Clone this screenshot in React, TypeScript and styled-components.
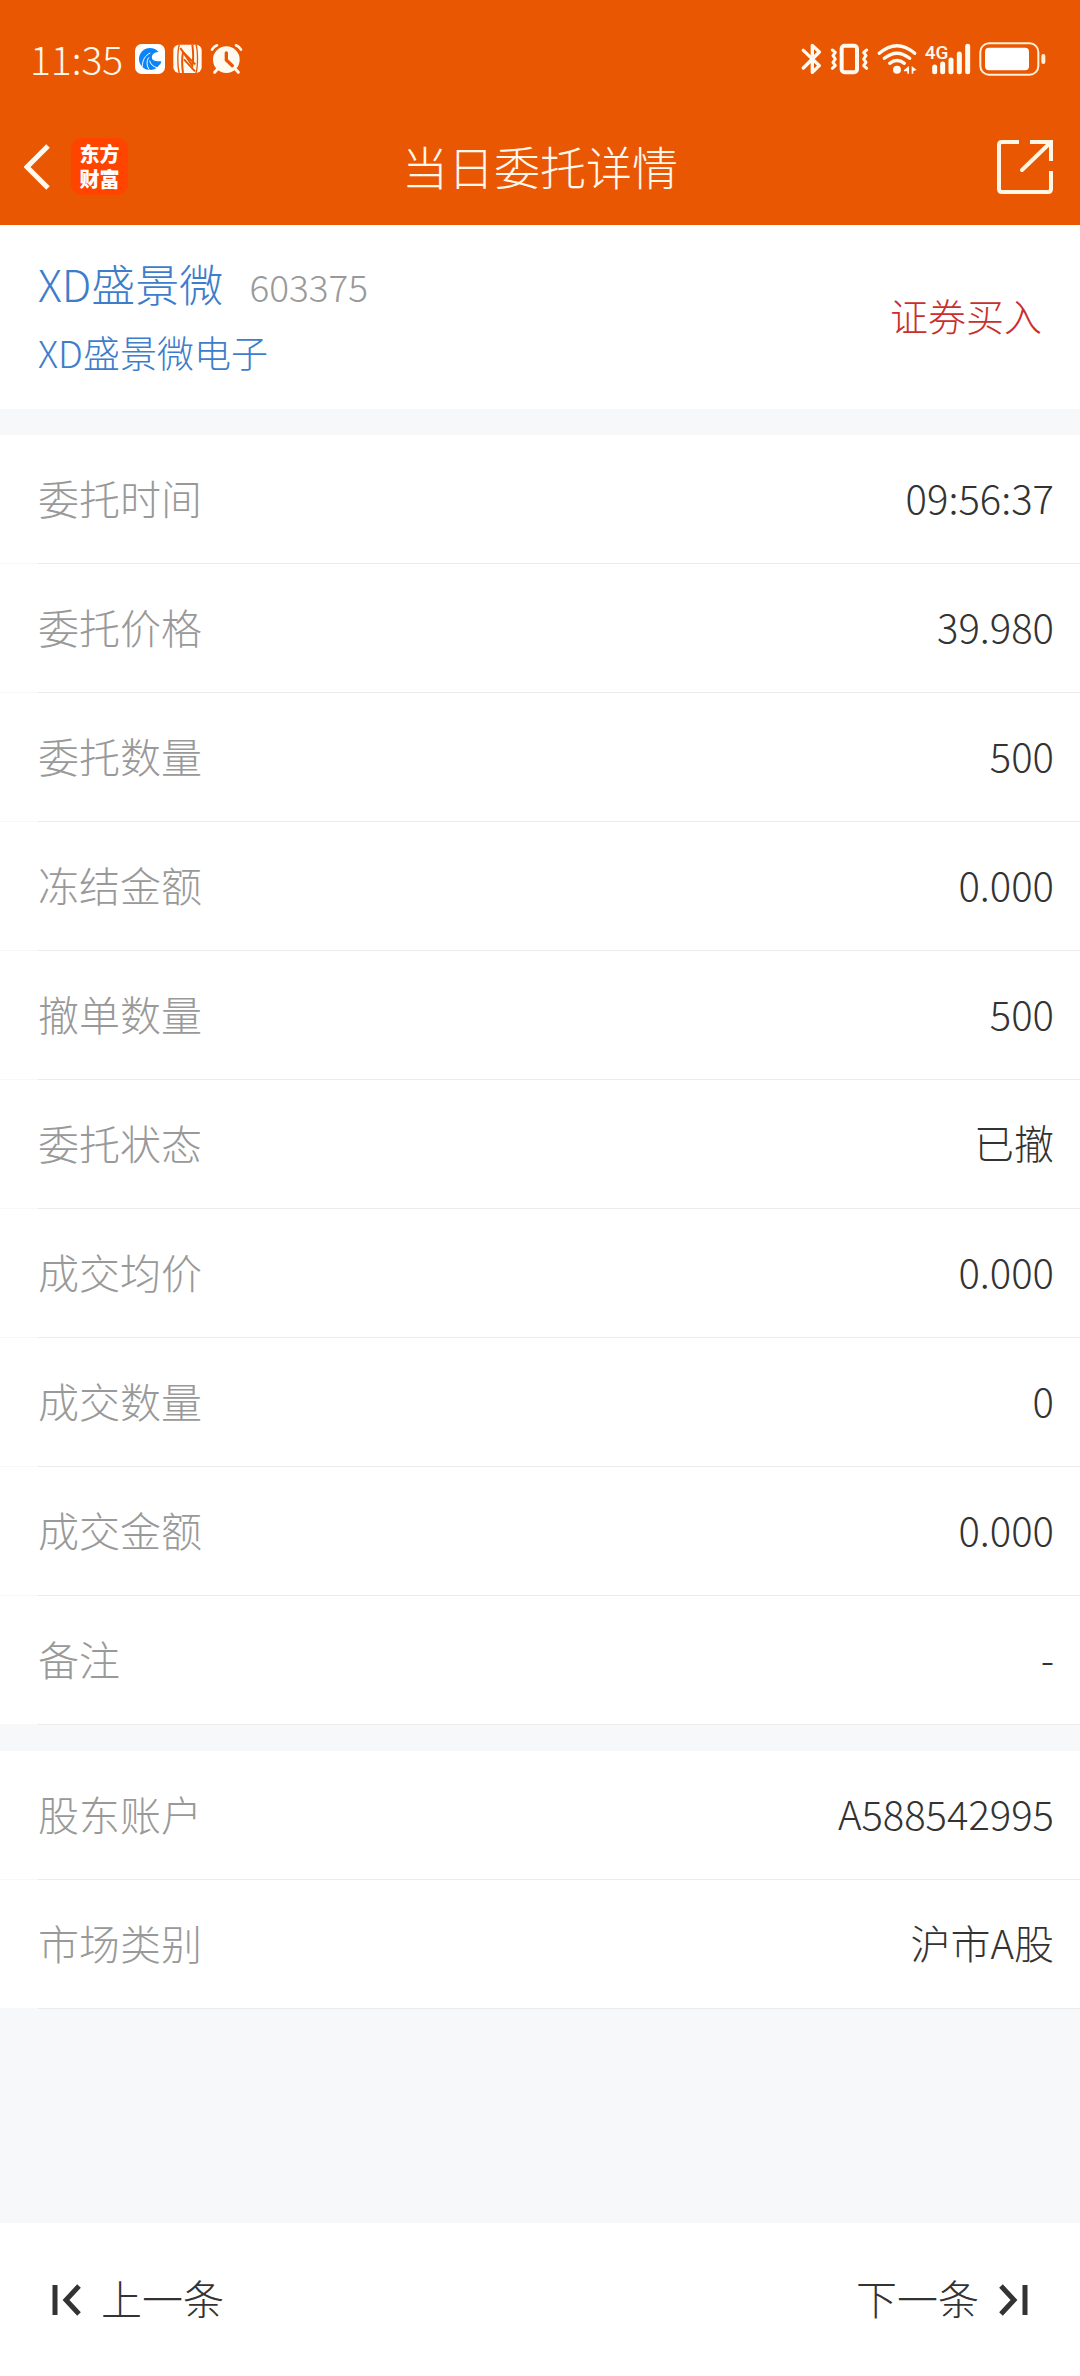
import React from "react";
import styled, { createGlobalStyle } from "styled-components";

const GlobalStyle = createGlobalStyle`
  * { box-sizing: border-box; }
  body {
    margin: 0;
    background: #f7f8fa;
    color: #333;
    font-family: "Noto Sans CJK SC", sans-serif;
    font-weight: 300;
  }
`;

const Page = styled.div`
  display: flex;
  flex-direction: column;
  min-height: 100vh;
`;

const Header = styled.header`
  background: #ea5703;
  color: #fff8ec;
`;

const StatusBar = styled.div`
  display: flex;
  align-items: center;
  justify-content: space-between;
  height: 118px;
  padding: 0 34px 0 30px;
`;

const StatusGroup = styled.div`
  display: flex;
  align-items: center;
  gap: 8px;
`;

const Clock = styled.time`
  margin-right: 4px;
  padding-bottom: 2px;
  font-size: 39px;
  line-height: 40px;
`;

const Glyph = styled.svg`
  display: block;
  flex: none;
`;

const NavBar = styled.nav`
  display: grid;
  grid-template-columns: 1fr auto 1fr;
  align-items: center;
  height: 107px;
  padding: 0 24px 10px;
`;

const NavStart = styled.div`
  display: flex;
  align-items: center;
  gap: 20px;
`;

const IconButton = styled.button`
  display: block;
  padding: 0;
  border: 0;
  background: none;
  color: inherit;
  cursor: pointer;
`;

const ShareButton = styled(IconButton)`
  justify-self: end;
`;

const Brand = styled.a`
  display: grid;
  place-content: center;
  width: 57px;
  height: 57px;
  padding-bottom: 2px;
  border-radius: 11px;
  background: #ff4400;
  color: #fff;
  font-size: 20px;
  font-weight: 900;
  line-height: 25px;
  text-align: center;
  text-decoration: none;
`;

const Title = styled.h1`
  margin: 0;
  padding-bottom: 4px;
  font-size: 46px;
  font-weight: 300;
  line-height: 60px;
`;

const Summary = styled.section`
  display: flex;
  align-items: center;
  justify-content: space-between;
  height: 184px;
  padding: 0 38px 4px;
  background: #fff;
`;

const StockNames = styled.div`
  display: flex;
  flex-direction: column;
  gap: 10px;
`;

const NameLine = styled.div`
  display: flex;
  align-items: baseline;
  gap: 26px;
  line-height: 60px;
`;

const StockName = styled.span`
  color: #3d7dcb;
  font-size: 44px;
`;

const StockCode = styled.span`
  color: #999;
  font-size: 37px;
`;

const CompanyName = styled.span`
  color: #3d7dcb;
  font-size: 37px;
  line-height: 52px;
`;

const Side = styled.span`
  color: #c9302c;
  font-size: 38px;
  line-height: 52px;
`;

const Details = styled.dl`
  margin: 26px 0 0;
  background: #fff;
`;

const Row = styled.div`
  display: flex;
  align-items: center;
  justify-content: space-between;
  height: 129px;
  padding: 0 26px 6px 38px;
  background: linear-gradient(to right, #f8f8f8 38px, #ebebec 38px) bottom / 100% 1px no-repeat;
`;

const Label = styled.dt`
  color: #999;
  font-size: 41px;
  line-height: 60px;
`;

const Value = styled.dd`
  margin: 0;
  font-size: 40px;
  line-height: 60px;
`;

const Pager = styled.footer`
  display: flex;
  align-items: center;
  justify-content: space-between;
  height: 153px;
  margin-top: auto;
  padding: 0 52px;
  background: #fff;
`;

const PagerButton = styled.button`
  display: flex;
  align-items: center;
  gap: 19px;
  padding: 0;
  border: 0;
  background: none;
  color: #333;
  font: inherit;
  font-size: 41px;
  line-height: 60px;
  cursor: pointer;
`;

const PagerText = styled.span`
  padding-bottom: 6px;
`;

const orderRows = [
  ["委托时间", "09:56:37"],
  ["委托价格", "39.980"],
  ["委托数量", "500"],
  ["冻结金额", "0.000"],
  ["撤单数量", "500"],
  ["委托状态", "已撤"],
  ["成交均价", "0.000"],
  ["成交数量", "0"],
  ["成交金额", "0.000"],
  ["备注", "-"],
];

const accountRows = [
  ["股东账户", "A588542995"],
  ["市场类别", "沪市A股"],
];

const DetailList = ({ rows }: { rows: string[][] }) => (
  <Details>
    {rows.map(([label, value]) => (
      <Row key={label}>
        <Label>{label}</Label>
        <Value>{value}</Value>
      </Row>
    ))}
  </Details>
);

const BrowserIcon = () => (
  <Glyph width="30" height="34" viewBox="402 66 90 102" aria-hidden="true">
    <rect x="402" y="72" width="90" height="90" rx="20" fill="#fff" />
    <circle cx="447" cy="117" r="33" fill="#0d84f5" />
    <path d="M486 98C472 94 456 96 453 108C450 119 460 127 482 122L490 112Z" fill="#fff" />
    <path d="M424 140C424 121 432 106 448 99M446 151C436 138 436 122 444 112M468 143C456 140 448 132 446 122" fill="none" stroke="#fff" strokeWidth="3" />
    <path d="M455 124C460 133 470 134 481 124L478 133C469 137 458 135 452 127Z" fill="#0d84f5" />
  </Glyph>
);

const NfcIcon = () => (
  <Glyph width="29" height="34" viewBox="519 66 87 102" aria-hidden="true">
    <rect x="520" y="74" width="85" height="85" rx="17" fill="#fffaf0" />
    <g fill="none" stroke="#ea5703">
      <path d="M538 74C532 92 532 141 538 159M588 74C594 92 594 141 588 159" strokeWidth="4" />
      <path d="M549 159C546 138 546 112 549 96L586 133" strokeWidth="6" />
      <path d="M577 74C580 95 580 121 577 137L541 84" strokeWidth="6" />
      <path d="M552 118L585 154" strokeWidth="6" />
    </g>
  </Glyph>
);

const AlarmIcon = () => (
  <Glyph width="33" height="34" viewBox="630 66 99 102" aria-hidden="true">
    <g stroke="#fffaf0" strokeLinecap="round" fill="none">
      <path d="M636 89Q641 80 651 76M723 89Q718 80 708 76" strokeWidth="8" />
      <path d="M653 147L644 157M706 147L715 157" strokeWidth="9" />
    </g>
    <circle cx="679" cy="119" r="40" fill="#fffaf0" />
    <path d="M679 99V120L697 137" fill="none" stroke="#ea5703" strokeWidth="10" strokeLinecap="round" strokeLinejoin="round" />
  </Glyph>
);

const BluetoothIcon = () => (
  <Glyph width="21" height="34" viewBox="63 66 63 102" aria-hidden="true">
    <path d="M70 91L118 137L97 157V76L118 96L70 144" fill="none" stroke="#fffaf0" strokeWidth="10" strokeLinecap="round" strokeLinejoin="round" />
  </Glyph>
);

const VibrateIcon = () => (
  <Glyph width="39" height="34" viewBox="150 66 117 102" aria-hidden="true">
    <g fill="none" stroke="#fffaf0" strokeLinecap="round" strokeLinejoin="round">
      <rect x="185" y="77" width="46" height="80" rx="9" strokeWidth="12" />
      <path d="M157 90L166 97L159 107L166 117L159 127L166 137L157 145M260 90L251 97L258 107L251 117L258 127L251 137L260 145" strokeWidth="9" />
    </g>
  </Glyph>
);

const WifiIcon = () => (
  <Glyph width="40" height="34" viewBox="291 66 120 102" aria-hidden="true">
    <g fill="none" stroke="#fffaf0" strokeWidth="10" strokeLinecap="round">
      <path d="M298 100Q351 54 404 100" />
      <path d="M313 115Q351 84 389 115" />
      <path d="M329 130Q351 113 373 130" />
    </g>
    <circle cx="351" cy="149" r="12" fill="#fffaf0" />
    <path d="M387 138V161H382V154H372V150ZM395 138L410 150L400 153V161H395Z" fill="#fffaf0" />
  </Glyph>
);

const NetworkLabel = styled.text`
  fill: #fffaf0;
  font-family: Roboto, sans-serif;
  font-size: 57px;
  font-weight: 500;
`;

const SignalIcon = () => (
  <Glyph width="46" height="34" viewBox="435 66 138 102" role="img" aria-label="4G">
    <NetworkLabel x="434" y="116">4G</NetworkLabel>
    <path d="M464 141V155M488 132V155M513 120V155M538 102V155M563 79V155" stroke="#fffaf0" strokeWidth="15" strokeLinecap="round" />
  </Glyph>
);

const BatteryIcon = () => (
  <Glyph width="67" height="34" viewBox="597 66 201 102" aria-hidden="true">
    <rect x="601" y="70" width="174" height="94" rx="26" fill="none" stroke="#fff0d8" strokeWidth="6" />
    <rect x="615" y="83" width="132" height="68" rx="12" fill="#fff" />
    <rect x="784" y="102" width="12" height="30" rx="6" fill="#fff0d8" />
  </Glyph>
);

const BackIcon = () => (
  <Glyph width="27" height="50" viewBox="0 0 27 50" aria-hidden="true">
    <path d="M24 4L3 25L24 46" fill="none" stroke="#fffaf0" strokeWidth="5" />
  </Glyph>
);

const ShareIcon = () => (
  <Glyph width="60" height="58" viewBox="1 0 60 58" aria-hidden="true">
    <g fill="none" stroke="#fff6e6" strokeWidth="4">
      <path d="M24 4H7Q4 4 4 7V51Q4 54 7 54H53Q56 54 56 51V33" />
      <path d="M35 4H56V23" />
      <path d="M55 5L27 32" strokeLinecap="round" />
    </g>
  </Glyph>
);

const PreviousIcon = () => (
  <Glyph width="30" height="34" viewBox="0 0 30 34" aria-hidden="true">
    <path d="M3 2V32M27 3L14 17L27 31" fill="none" stroke="#333" strokeWidth="5" />
  </Glyph>
);

const NextIcon = () => (
  <Glyph width="30" height="34" viewBox="0 0 30 34" aria-hidden="true">
    <path d="M27 2V32M3 3L16 17L3 31" fill="none" stroke="#333" strokeWidth="5" />
  </Glyph>
);

export default function App() {
  return (
    <Page>
      <GlobalStyle />
      <Header>
        <StatusBar>
          <StatusGroup>
            <Clock>11:35</Clock>
            <BrowserIcon />
            <NfcIcon />
            <AlarmIcon />
          </StatusGroup>
          <StatusGroup>
            <BluetoothIcon />
            <VibrateIcon />
            <WifiIcon />
            <SignalIcon />
            <BatteryIcon />
          </StatusGroup>
        </StatusBar>
        <NavBar>
          <NavStart>
            <IconButton type="button" aria-label="返回">
              <BackIcon />
            </IconButton>
            <Brand href="#home">
              <span>东方</span>
              <span>财富</span>
            </Brand>
          </NavStart>
          <Title>当日委托详情</Title>
          <ShareButton type="button" aria-label="分享">
            <ShareIcon />
          </ShareButton>
        </NavBar>
      </Header>
      <Summary>
        <StockNames>
          <NameLine>
            <StockName>XD盛景微</StockName>
            <StockCode>603375</StockCode>
          </NameLine>
          <CompanyName>XD盛景微电子</CompanyName>
        </StockNames>
        <Side>证券买入</Side>
      </Summary>
      <DetailList rows={orderRows} />
      <DetailList rows={accountRows} />
      <Pager>
        <PagerButton type="button">
          <PreviousIcon />
          <PagerText>上一条</PagerText>
        </PagerButton>
        <PagerButton type="button">
          <PagerText>下一条</PagerText>
          <NextIcon />
        </PagerButton>
      </Pager>
    </Page>
  );
}
